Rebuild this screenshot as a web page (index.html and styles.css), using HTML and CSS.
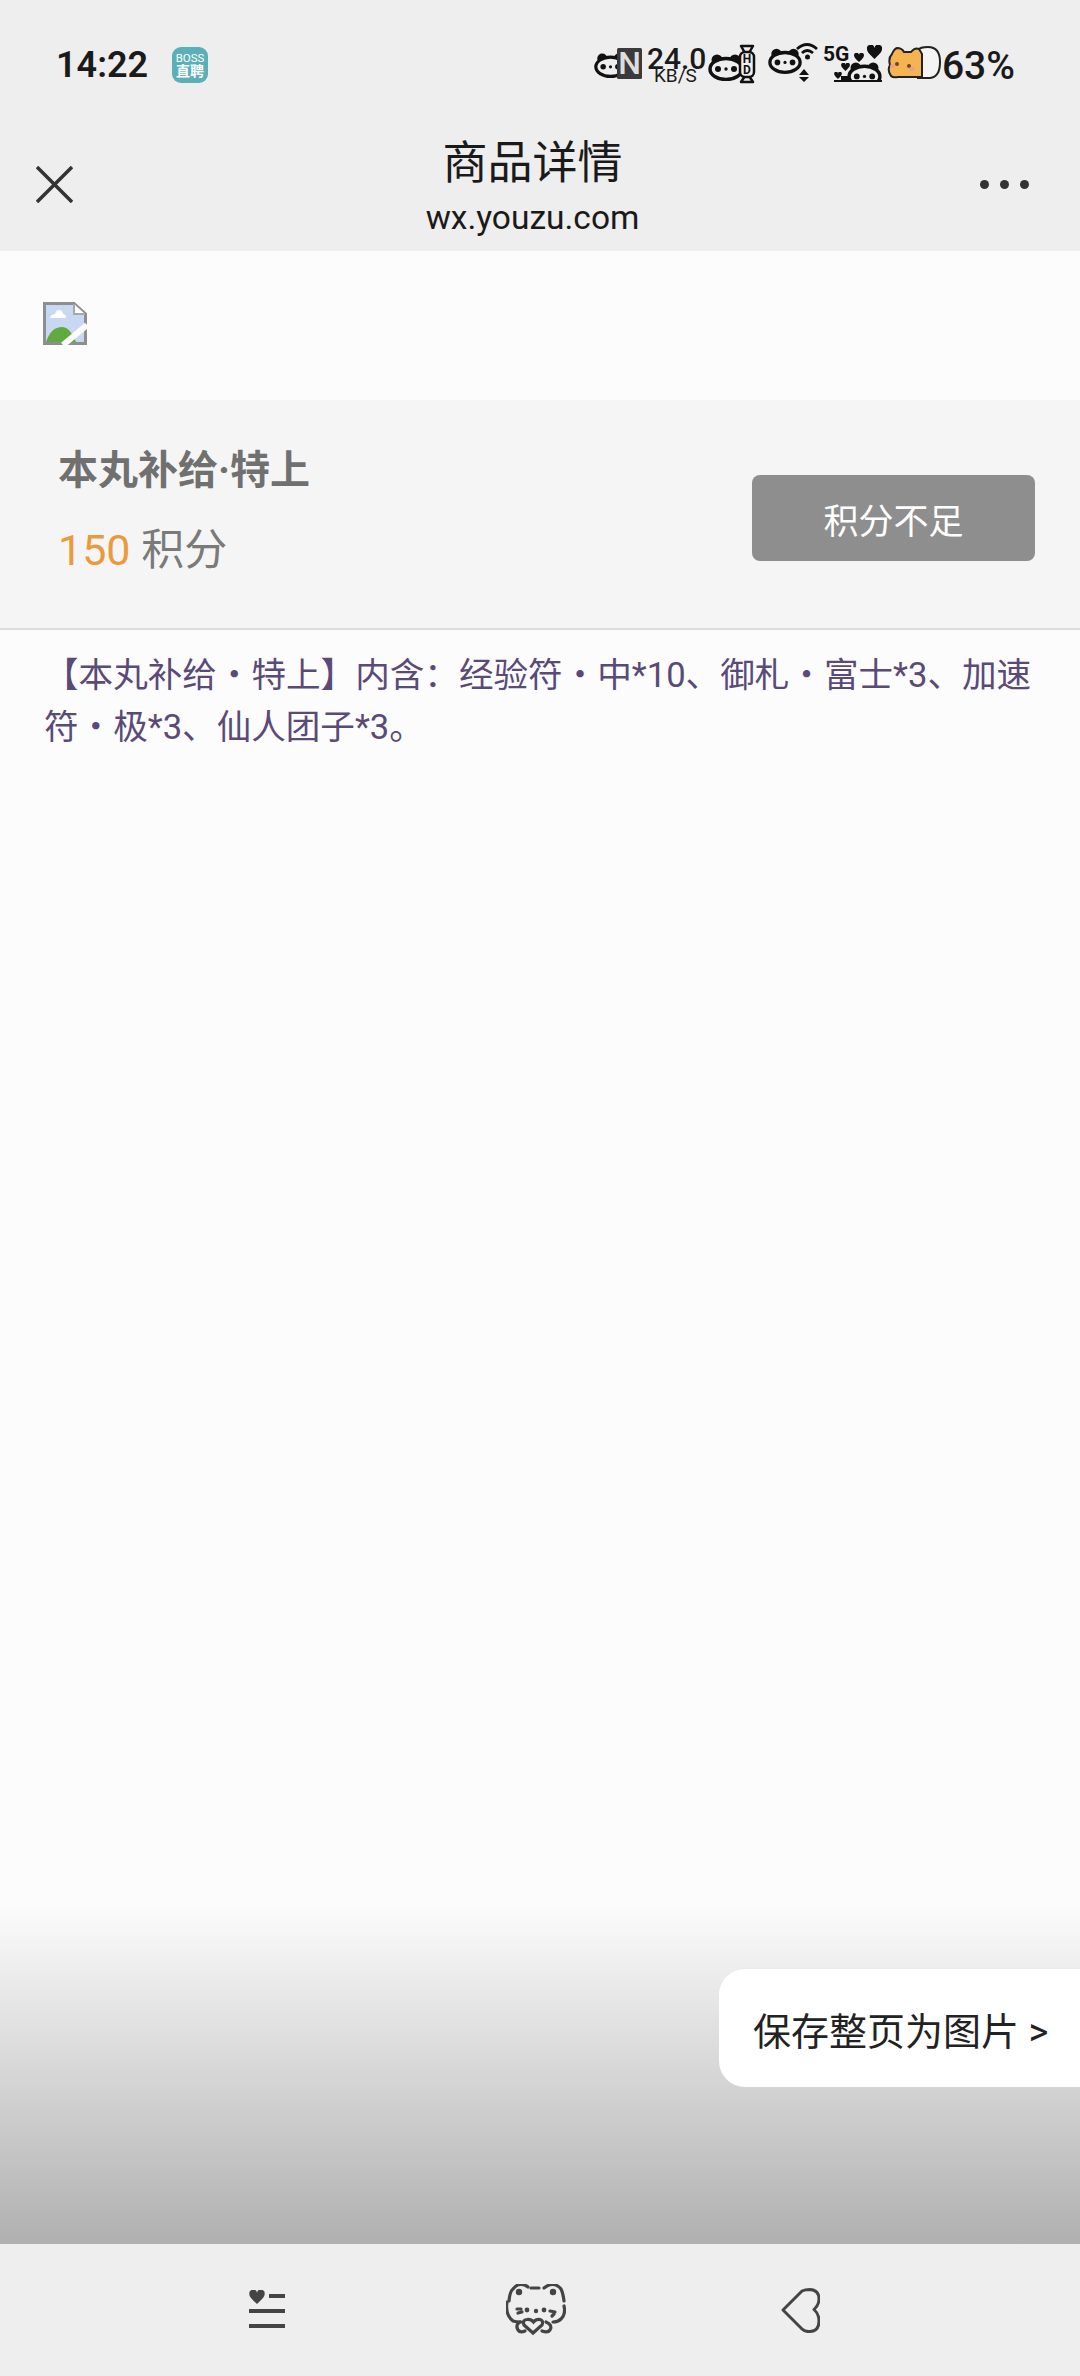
FILE: index.html
```html
<!DOCTYPE html>
<html lang="zh-CN">
<head>
    <meta charset="UTF-8">
    <meta name="viewport" content="width=device-width, initial-scale=1.0">
    <title>商品详情</title>
    <link rel="stylesheet" href="styles.css">
</head>
<body>
    <!-- Shared icon parts -->
    <svg class="defs" width="0" height="0" aria-hidden="true">
        <symbol id="panda" viewBox="0 0 36 28">
            <circle cx="9" cy="7" r="5.5" fill="#111"/>
            <circle cx="27" cy="7" r="5.5" fill="#111"/>
            <ellipse cx="18" cy="16" rx="16" ry="10.5" fill="#eee" stroke="#111" stroke-width="3.5"/>
            <circle cx="10" cy="16" r="3" fill="#111"/>
            <circle cx="18" cy="16" r="1.7" fill="#111"/>
            <circle cx="26" cy="16" r="3" fill="#111"/>
        </symbol>
        <symbol id="heart" viewBox="0 0 24 22">
            <path d="M12 22C5 15 0 11 0 6.500A6 6 0 0 1 12 4.500A6 6 0 0 1 24 6.500C24 11 19 15 12 22Z" fill="currentColor"/>
        </symbol>
    </svg>

    <div class="page">
        <!-- Phone status bar -->
        <div class="status-bar">
            <div class="status-left">
                <span class="time">14:22</span>
                <span class="boss-badge">
                    <span class="boss-top">BOSS</span>
                    <span class="boss-bottom">直聘</span>
                </span>
            </div>
            <div class="status-right">
                <svg class="icon-nfc" viewBox="0 0 53 44">
                    <use href="#panda" x="0" y="11" width="33" height="28"/>
                    <rect x="23" y="8" width="25" height="31" rx="1.500" fill="#3a3a3a"/>
                    <text x="35.500" y="34" class="nfc-letter">N</text>
                </svg>
                <div class="speed">
                    <span class="speed-value">24.0</span>
                    <span class="speed-unit">KB/S</span>
                </div>
                <svg class="icon-hd" viewBox="0 0 60 44">
                    <use href="#panda" x="0" y="13" width="36" height="28"/>
                    <path d="M33 6H45L41 13H37ZM37 36H41L45 42H33Z" fill="#eee" stroke="#111" stroke-width="2.500" stroke-linejoin="round"/>
                    <rect x="32" y="12" width="14" height="25" rx="5" fill="#eee" stroke="#111" stroke-width="2.500"/>
                    <text x="39" y="23" class="hd-letter">H</text>
                    <text x="39" y="34" class="hd-letter">D</text>
                </svg>
                <svg class="icon-wifi" viewBox="0 0 55 44">
                    <use href="#panda" x="0" y="7" width="34" height="27"/>
                    <path d="M29 9Q39 0 49 9M34 13Q39 8 45 13" fill="none" stroke="#111" stroke-width="2.800"/>
                    <circle cx="39.500" cy="17" r="2.500" fill="#111"/>
                    <path d="M36 29L41 35H31ZM31 37H41L36 42Z" fill="#111"/>
                </svg>
                <svg class="icon-signal" viewBox="0 0 63 44">
                    <text x="0" y="21" class="signal-text">5G</text>
                    <use href="#panda" x="24" y="21" width="35" height="27"/>
                    <rect x="0" y="41" width="63" height="3" fill="#eee"/>
                    <rect x="11" y="40" width="48" height="2" fill="#111"/>
                    <use href="#heart" x="44" y="5" width="15" height="14"/>
                    <use href="#heart" x="31" y="13" width="10" height="9"/>
                    <use href="#heart" x="18" y="23" width="9" height="8"/>
                    <use href="#heart" x="11" y="32" width="8" height="7"/>
                    <rect x="18" y="36" width="9" height="4" fill="#111"/>
                </svg>
                <svg class="icon-battery" viewBox="0 0 56 44">
                    <path d="M32 10Q34 7 42 7Q54 7 54 22Q54 37 44 38H32Z" fill="#f4f4f4" stroke="#222" stroke-width="2"/>
                    <path d="M5 36Q1 30 4 25Q2 18 6 14Q8 9 11 8Q16 8 18 12H25Q29 7 33 9Q35 12 36 14V37H12Q7 38 5 36Z" fill="#f6b352" stroke="#222" stroke-width="2"/>
                    <circle cx="11" cy="24" r="2" fill="#6a4630"/>
                    <circle cx="23" cy="26" r="2" fill="#6a4630"/>
                    <ellipse cx="6.500" cy="26" rx="2.500" ry="2" fill="#ef9c8c"/>
                    <ellipse cx="26" cy="29" rx="3" ry="2" fill="#ef9c8c"/>
                </svg>
                <span class="battery-level">63%</span>
            </div>
        </div>

        <!-- Title bar -->
        <div class="title-bar">
            <svg class="close-icon" viewBox="0 0 37 37">
                <path d="M1 1L36 36M36 1L1 36" stroke="#333" stroke-width="3.500"/>
            </svg>
            <div class="title-text">
                <div class="title-main">商品详情</div>
                <div class="title-url">wx.youzu.com</div>
            </div>
            <div class="more-dots">
                <span class="dot"></span>
                <span class="dot"></span>
                <span class="dot"></span>
            </div>
        </div>

        <!-- Page content -->
        <div class="content">
            <div class="banner">
                <svg class="broken-image" viewBox="0 0 44 43">
                    <path d="M1.500 1.500H31L42.500 12V41.500H1.500Z" fill="#c8d8f2" stroke="#8e8e8e" stroke-width="3"/>
                    <path d="M31 2V12H42" fill="#fff" stroke="#a8a8a8" stroke-width="2"/>
                    <path d="M7 16Q8 12 12 12Q13 8 16 8Q20 8 20 12Q23 12 23 16Z" fill="#fff"/>
                    <path d="M3 40Q8 25 19 25Q27 25 33 40Z" fill="#62a93f"/>
                    <path d="M20 43L44 23" stroke="#fcfcfc" stroke-width="6"/>
                </svg>
            </div>

            <div class="product">
                <div class="product-info">
                    <div class="product-name">本丸补给·特上</div>
                    <div class="product-price"><span class="price-num">150</span> 积分</div>
                </div>
                <button class="redeem-btn">积分不足</button>
            </div>

            <p class="product-desc">【本丸补给・特上】内含：经验符・中*10、御札・富士*3、加速符・极*3、仙人团子*3。</p>

            <div class="save-tip">保存整页为图片 &gt;</div>
        </div>

        <!-- Phone bottom bar -->
        <div class="nav-bar">
            <svg class="nav-list" viewBox="0 0 37 40">
                <use href="#heart" x="0" y="0" width="16" height="14"/>
                <path d="M20 6H36M0 21H36M0 36H36" stroke="#444" stroke-width="4"/>
            </svg>
            <svg class="nav-cat" viewBox="0 0 60 52" fill="none" stroke="#444" stroke-width="3.200" stroke-linecap="round">
                <path d="M3 17Q4 7 7 5Q11 0 15 0.500Q19 0.500 22 3"/>
                <path d="M25 4H33"/>
                <path d="M38 4Q43 0 47 0.500Q52 1 55 5Q57 9 58 17"/>
                <path d="M58 22Q60 30 55 35Q52 38 47 38"/>
                <path d="M1 18Q-1 31 7 37Q10 38 15 38"/>
                <path d="M27 49L18 41Q16 36 21 35.500Q25 35 27.500 38Q30 35 34 35.500Q38 37 36 41Z"/>
                <path d="M14 38Q9 41 12 46Q14 49 19 47"/>
                <path d="M40 38Q47 41 44 46Q42 49 36 47"/>
                <path d="M11 25H15M12 29L16 28M44 27L49 28M46 32L48 30"/>
                <g fill="#444" stroke="none">
                    <circle cx="13" cy="8" r="3.200"/>
                    <circle cx="47" cy="8" r="3.200"/>
                    <circle cx="21" cy="26" r="2.400"/>
                    <circle cx="30" cy="27" r="2.200"/>
                    <circle cx="38" cy="26" r="2.400"/>
                </g>
            </svg>
            <svg class="nav-back" viewBox="0 0 39 45">
                <path d="M2 22L21 3Q24 1.500 29 1.500Q38 2 38 11Q38 17 33 21.500Q38 26 38 33Q38 43 29 43.500Q24 44 21 41Z" fill="none" stroke="#444" stroke-width="3" stroke-linejoin="round"/>
            </svg>
        </div>
    </div>
</body>
</html>
```

FILE: styles.css
```css
* {
    box-sizing: border-box;
}

body {
    margin: 0;
    font-family: Roboto, 'Noto Sans CJK SC', sans-serif;
    background: #eee;
}

.defs {
    position: absolute;
}

.page {
    width: 1080px;
    height: 2376px;
    display: flex;
    flex-direction: column;
    overflow: hidden;
}

/* Status bar */
.status-bar {
    height: 120px;
    padding: 40px 65px 0 56px;
    display: flex;
    justify-content: space-between;
    align-items: flex-start;
    background: #eee;
}

.status-left {
    display: flex;
    align-items: center;
    height: 44px;
    margin-top: 3px;
    gap: 24px;
}

.time {
    font-size: 36px;
    font-weight: 600;
    color: #1a1a1a;
}

.boss-badge {
    width: 36px;
    height: 36px;
    border-radius: 9px;
    background: #5bb0b8;
    color: #fff;
    display: flex;
    flex-direction: column;
    align-items: center;
    justify-content: center;
}

.boss-top {
    font-size: 11.500px;
    line-height: 12px;
}

.boss-bottom {
    font-size: 14px;
    line-height: 15px;
    font-weight: 700;
}

.status-right {
    display: flex;
    align-items: flex-start;
    height: 44px;
    color: #111;
}

.status-right svg {
    height: 44px;
    display: block;
}

.icon-nfc { width: 53px; }
.icon-hd { width: 60px; }
.icon-wifi { width: 55px; }
.icon-signal { width: 63px; }
.icon-battery { width: 56px; }

.nfc-letter {
    font-family: Roboto, sans-serif;
    font-size: 32px;
    font-weight: 500;
    fill: #ddd;
    text-anchor: middle;
}

.hd-letter {
    font-family: Roboto, sans-serif;
    font-size: 12px;
    font-weight: 700;
    fill: #111;
    text-anchor: middle;
}

.signal-text {
    font-family: Roboto, sans-serif;
    font-size: 21px;
    font-weight: 700;
    fill: #111;
}

.speed {
    width: 61px;
    height: 44px;
    display: flex;
    flex-direction: column;
    align-items: flex-start;
    color: #1a1a1a;
}

.speed-value {
    font-size: 30px;
    font-weight: 500;
    line-height: 26px;
    margin-top: 6px;
}

.speed-unit {
    font-size: 19px;
    line-height: 14px;
    margin-top: -3px;
    margin-left: 7px;
}

.battery-level {
    font-size: 39px;
    font-weight: 500;
    line-height: 44px;
    margin-top: 4px;
    color: #1a1a1a;
}

/* Title bar */
.title-bar {
    height: 131px;
    padding: 0 51px 0 36px;
    display: grid;
    grid-template-columns: 1fr auto 1fr;
    align-items: center;
    background: #eee;
}

.close-icon {
    width: 37px;
    height: 37px;
    margin-bottom: 2px;
}

.title-text {
    text-align: center;
    color: #1a1a1a;
}

.title-main {
    font-size: 45px;
    line-height: 58px;
}

.title-url {
    font-size: 33.500px;
    line-height: 38px;
    margin-top: 6px;
}

.more-dots {
    display: flex;
    justify-self: end;
    gap: 11px;
    margin-bottom: 2px;
}

.dot {
    width: 9px;
    height: 9px;
    border-radius: 50%;
    background: #333;
}

/* Content */
.content {
    flex: 1;
    position: relative;
    background: linear-gradient(#fcfcfc 1652px, #b0b0b0 100%);
}

.banner {
    height: 149px;
    padding: 51px 0 0 43px;
}

.broken-image {
    width: 44px;
    height: 43px;
    display: block;
}

.product {
    height: 230px;
    padding: 44px 45px 0 58px;
    display: flex;
    justify-content: space-between;
    align-items: flex-start;
    background: #f5f5f5;
    border-bottom: 2px solid #ddd;
}

.product-name {
    font-size: 40px;
    line-height: 54px;
    font-weight: 700;
    color: #707070;
}

.product-price {
    font-size: 43px;
    line-height: 58px;
    margin-top: 23px;
    color: #7a7a7a;
}

.price-num {
    color: #ea9a3c;
}

.redeem-btn {
    width: 283px;
    height: 86px;
    margin-top: 31px;
    border: none;
    border-radius: 8px;
    background: #8e8e8e;
    color: #fff;
    font-family: inherit;
    font-size: 35px;
}

.product-desc {
    margin: 0;
    padding: 19px 40px 0 44px;
    font-size: 34.600px;
    line-height: 52px;
    color: #5a4a78;
}

.save-tip {
    position: absolute;
    right: 0;
    top: 1718px;
    width: 361px;
    height: 118px;
    padding-left: 34px;
    display: flex;
    align-items: center;
    border-radius: 26px 0 0 26px;
    background: #fff;
    font-size: 38px;
    color: #222;
}

/* Bottom bar */
.nav-bar {
    height: 132px;
    padding-left: 249px;
    display: flex;
    align-items: center;
    gap: 218px;
    background: #eee;
}

.nav-list {
    width: 37px;
    height: 40px;
    color: #444;
}

.nav-cat {
    width: 60px;
    height: 52px;
    margin: 0 -3px 0 2px;
}

.nav-back {
    width: 39px;
    height: 45px;
}
```
